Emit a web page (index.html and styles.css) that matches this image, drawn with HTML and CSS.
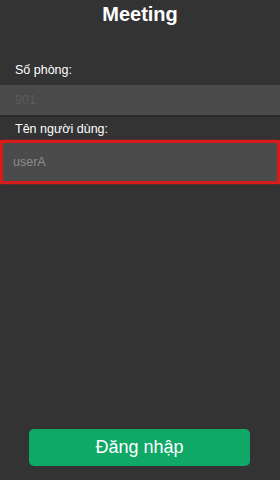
FILE: index.html
```html
<!DOCTYPE html>
<html lang="vi">
<head>
  <meta charset="UTF-8">
  <meta name="viewport" content="width=device-width, initial-scale=1.0">
  <title>Meeting</title>
  <link rel="stylesheet" href="styles.css">
</head>
<body>
  <div class="screen">
    <h1 class="title">Meeting</h1>

    <div class="field first">
      <label class="field-label" for="room">Số phòng:</label>
      <input class="field-input" id="room" type="text" placeholder="901">
    </div>

    <div class="field">
      <label class="field-label" for="user">Tên người dùng:</label>
      <input class="field-input error" id="user" type="text" placeholder="userA">
    </div>

    <div class="spacer"></div>

    <button class="login-btn" type="button">Đăng nhập</button>
  </div>
</body>
</html>
```

FILE: styles.css
```css
body {
  margin: 0;
  background: #333333;
  font-family: 'Liberation Sans', Arial, sans-serif;
  color: #ffffff;
}

.screen {
  height: 480px;
  display: flex;
  flex-direction: column;
}

.title {
  margin: 0;
  padding-top: 3px;
  font-size: 20px;
  line-height: 23px;
  font-weight: bold;
  text-align: center;
}

.field {
  display: flex;
  flex-direction: column;
}

.field.first {
  margin-top: 37px;
}

.field-label {
  padding: 0 15px;
  font-size: 12.5px;
  line-height: 15px;
  margin-top: 5px;
  margin-bottom: 3px;
}

.field.first .field-label {
  margin-top: 0;
  margin-bottom: 7px;
}

.field-input {
  box-sizing: border-box;
  width: 100%;
  height: 32px;
  margin: 0;
  padding: 0 15px;
  border: none;
  border-bottom: 2px solid #2a2a2a;
  background: #4a4a4a;
  font-family: inherit;
  font-size: 12.5px;
  color: #ffffff;
  outline: none;
}

.field-input::placeholder {
  color: #5c5c5c;
}

.field-input.error {
  height: 44px;
  padding: 0 10px;
  border: 3px solid #d81c1c;
  box-shadow: 0 0 2px rgba(216, 28, 28, 0.6);
  background: #4b4b4b;
}

.field-input.error::placeholder {
  color: #8c8c8c;
}

.spacer {
  flex: 1;
}

.login-btn {
  margin: 0 30px 14px 29px;
  height: 37px;
  border: none;
  border-radius: 5px;
  background: #10a866;
  color: #ffffff;
  font-family: inherit;
  font-size: 18px;
  cursor: pointer;
}
```
